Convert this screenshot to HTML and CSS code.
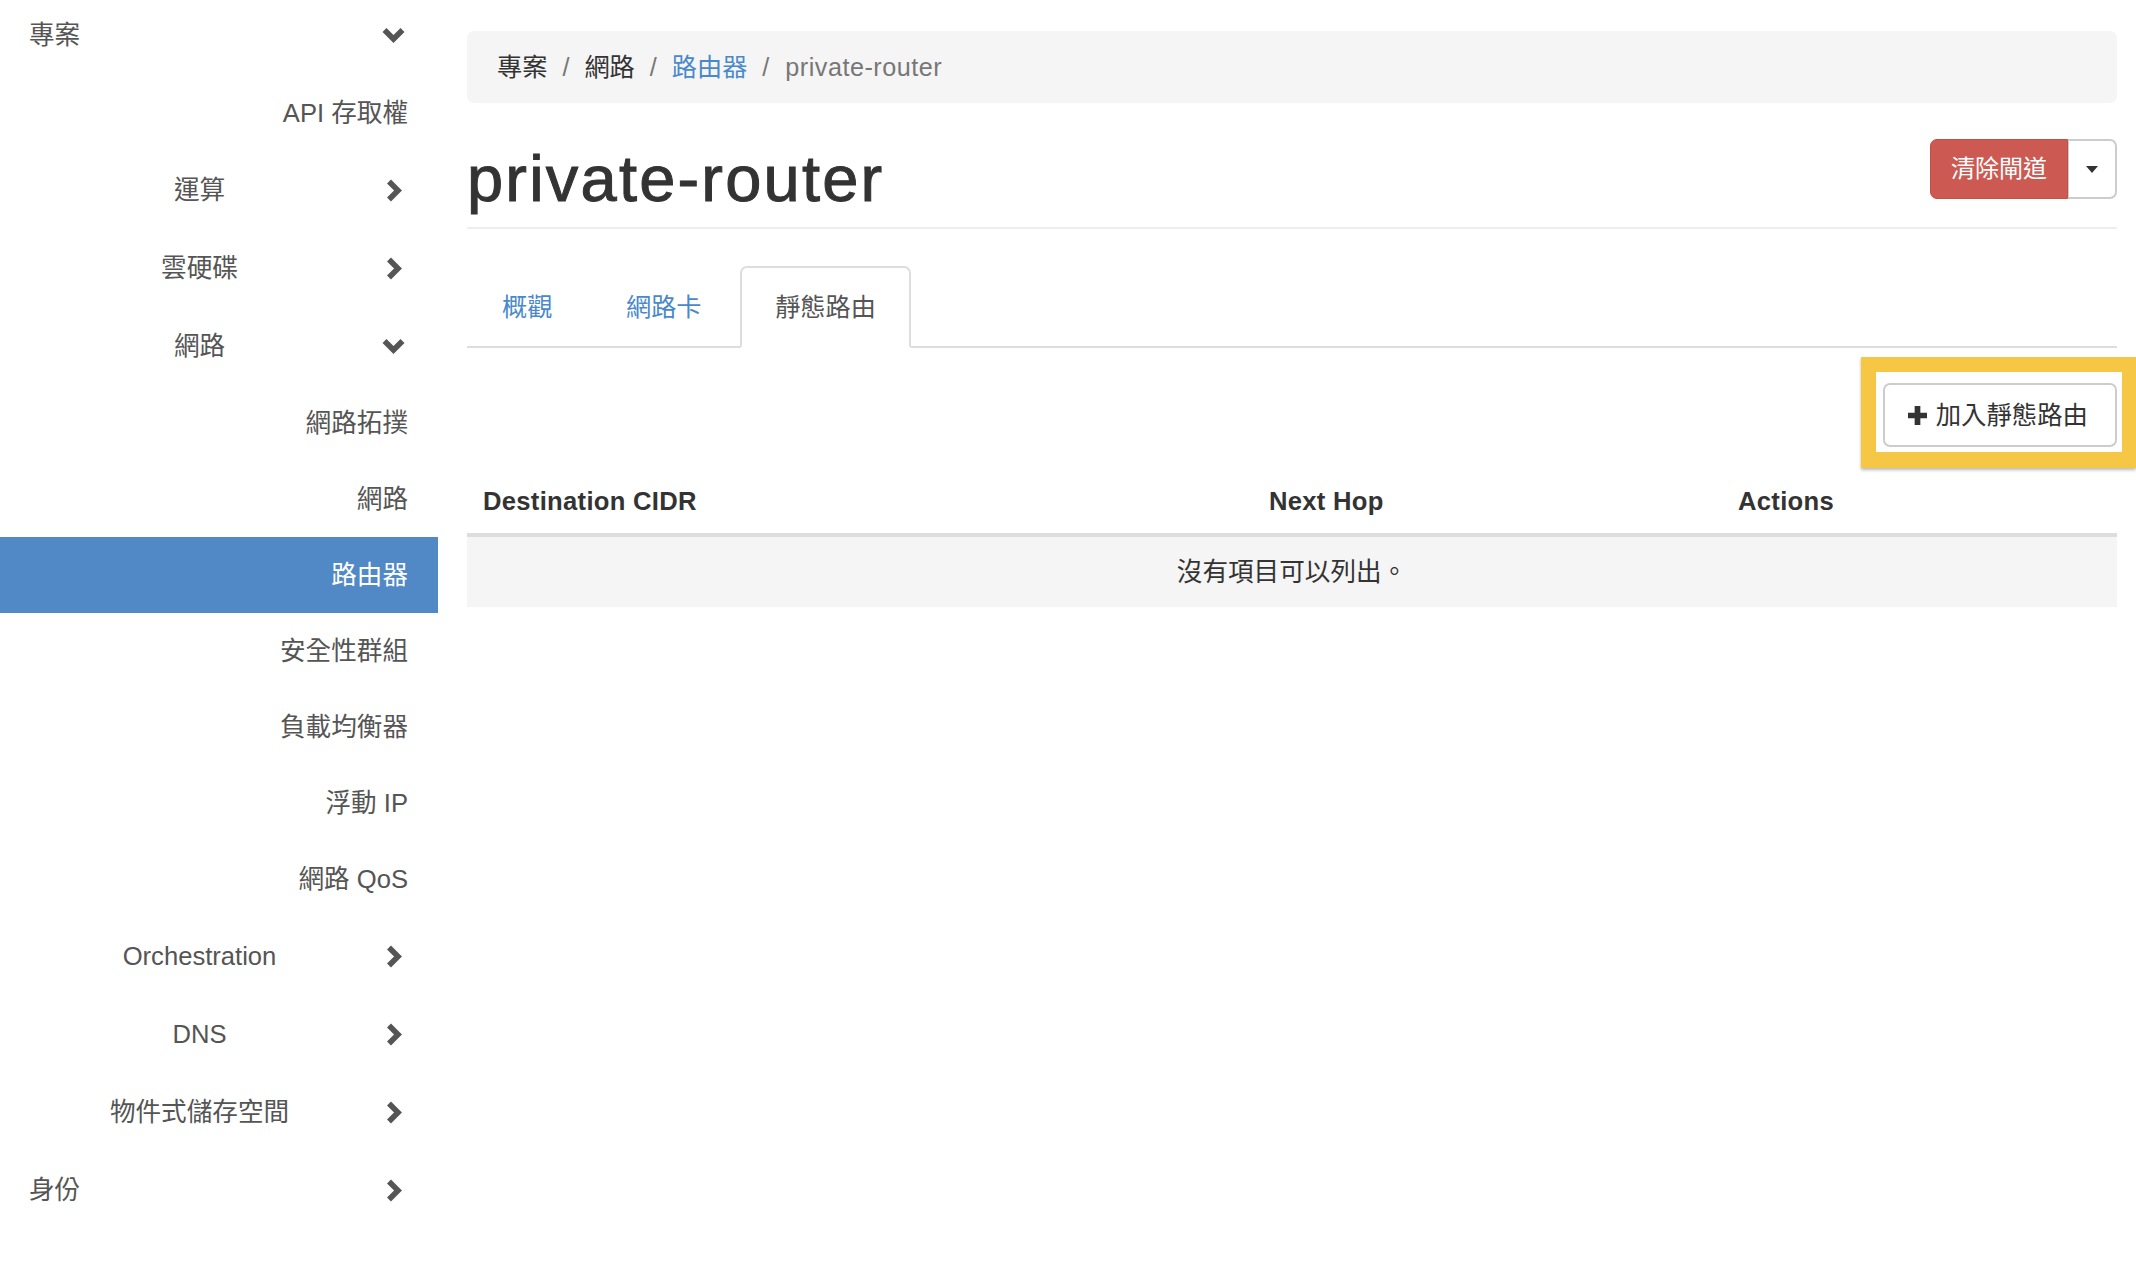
FILE: index.html
```html
<!DOCTYPE html>
<html lang="zh-Hant">
<head>
<meta charset="utf-8">
<title>private-router</title>
<link rel="stylesheet" href="styles.css">
</head>
<body>
<div class="layout">
  <nav class="sidebar">
    <div class="nav-row nav-top nav-first">
      <span class="nav-label">專案</span>
      <span class="nav-icon"><svg class="chev-down" width="23" height="16" viewBox="0 0 23 16"><polyline points="2.5,3 11.5,12 20.5,3"/></svg></span>
    </div>
    <div class="nav-row nav-leaf"><span>API 存取權</span></div>
    <div class="nav-row nav-group">
      <span class="nav-label">運算</span>
      <span class="nav-icon"><svg class="chev-right" width="16" height="23" viewBox="0 0 16 23"><polyline points="3,2.5 12,11.5 3,20.5"/></svg></span>
    </div>
    <div class="nav-row nav-group">
      <span class="nav-label">雲硬碟</span>
      <span class="nav-icon"><svg class="chev-right" width="16" height="23" viewBox="0 0 16 23"><polyline points="3,2.5 12,11.5 3,20.5"/></svg></span>
    </div>
    <div class="nav-row nav-group">
      <span class="nav-label">網路</span>
      <span class="nav-icon"><svg class="chev-down" width="23" height="16" viewBox="0 0 23 16"><polyline points="2.5,3 11.5,12 20.5,3"/></svg></span>
    </div>
    <div class="nav-row nav-leaf"><span>網路拓撲</span></div>
    <div class="nav-row nav-leaf"><span>網路</span></div>
    <div class="nav-row nav-leaf nav-active"><span>路由器</span></div>
    <div class="nav-row nav-leaf"><span>安全性群組</span></div>
    <div class="nav-row nav-leaf"><span>負載均衡器</span></div>
    <div class="nav-row nav-leaf"><span>浮動 IP</span></div>
    <div class="nav-row nav-leaf"><span>網路 QoS</span></div>
    <div class="nav-row nav-group">
      <span class="nav-label">Orchestration</span>
      <span class="nav-icon"><svg class="chev-right" width="16" height="23" viewBox="0 0 16 23"><polyline points="3,2.5 12,11.5 3,20.5"/></svg></span>
    </div>
    <div class="nav-row nav-group">
      <span class="nav-label">DNS</span>
      <span class="nav-icon"><svg class="chev-right" width="16" height="23" viewBox="0 0 16 23"><polyline points="3,2.5 12,11.5 3,20.5"/></svg></span>
    </div>
    <div class="nav-row nav-group">
      <span class="nav-label">物件式儲存空間</span>
      <span class="nav-icon"><svg class="chev-right" width="16" height="23" viewBox="0 0 16 23"><polyline points="3,2.5 12,11.5 3,20.5"/></svg></span>
    </div>
    <div class="nav-row nav-top">
      <span class="nav-label">身份</span>
      <span class="nav-icon"><svg class="chev-right" width="16" height="23" viewBox="0 0 16 23"><polyline points="3,2.5 12,11.5 3,20.5"/></svg></span>
    </div>
  </nav>

  <main class="content">
    <ol class="breadcrumb">
      <li>專案</li>
      <li>網路</li>
      <li><a class="crumb-link">路由器</a></li>
      <li class="crumb-active">private-router</li>
    </ol>

    <div class="page-header">
      <h1 class="title">private-router</h1>
      <div class="btn-group">
        <button class="btn-danger">清除閘道</button>
        <button class="btn-toggle"><span class="caret"></span></button>
      </div>
    </div>

    <ul class="nav-tabs">
      <li class="tab"><a>概觀</a></li>
      <li class="tab"><a>網路卡</a></li>
      <li class="tab tab-active"><a>靜態路由</a></li>
    </ul>

    <div class="toolbar">
      <div class="highlight">
        <button class="btn-default">
          <svg class="plus" width="19" height="19" viewBox="0 0 20 20"><path d="M7 0h6v7h7v6h-7v7H7v-7H0V7h7z"/></svg>
          <span>加入靜態路由</span>
        </button>
      </div>
    </div>

    <table class="table">
      <colgroup>
        <col class="col-cidr">
        <col class="col-hop">
        <col class="col-actions">
      </colgroup>
      <thead>
        <tr>
          <th>Destination CIDR</th>
          <th>Next Hop</th>
          <th>Actions</th>
        </tr>
      </thead>
      <tbody>
        <tr class="empty-row">
          <td colspan="3">沒有項目可以列出。</td>
        </tr>
      </tbody>
    </table>
  </main>
</div>
</body>
</html>
```

FILE: styles.css
```css
* {
  box-sizing: border-box;
}

html, body {
  margin: 0;
  padding: 0;
  background: #fff;
}

body {
  font-family: "Liberation Sans", "Noto Sans CJK TC", sans-serif;
  font-size: 25.2px;
  line-height: 36px;
  color: #333;
}

.layout {
  display: flex;
  align-items: flex-start;
  min-height: 1285px;
}

/* ---------- Sidebar ---------- */
.sidebar {
  width: 438px;
  flex: 0 0 438px;
  font-size: 25.6px;
  color: #555;
}

.nav-row {
  display: flex;
  align-items: center;
  white-space: nowrap;
}

.nav-top {
  height: 78px;
  padding: 0 33px 0 29px;
}

.nav-top.nav-first {
  height: 75px;
  padding-bottom: 5px;
}

.nav-top .nav-label {
  flex: 1;
  text-align: left;
}

.nav-group {
  height: 78px;
  padding: 0 33px 0 17px;
}

.nav-group .nav-label {
  flex: 1;
  text-align: center;
}

.nav-leaf {
  height: 76px;
  justify-content: flex-end;
  padding-right: 30px;
}

.nav-active {
  background: #5089c6;
  color: #fff;
}

.nav-icon {
  width: 23px;
  display: flex;
  align-items: center;
  justify-content: center;
}

.nav-icon svg {
  display: block;
}

.nav-icon polyline {
  fill: none;
  stroke: #555;
  stroke-width: 5.6;
  stroke-linejoin: miter;
  stroke-linecap: butt;
}

/* ---------- Content ---------- */
.content {
  flex: 1;
  min-width: 0;
  padding: 31px 19px 0 29px;
}

.breadcrumb {
  list-style: none;
  margin: 0;
  padding: 18px 30px;
  line-height: 36px;
  background: #f5f5f5;
  border-radius: 7px;
  color: #333;
}

.breadcrumb li {
  display: inline-block;
}

.breadcrumb li + li::before {
  content: "/\00a0";
  padding: 0 8px;
  color: #777;
}

.crumb-link {
  color: #4a89c9;
}

.crumb-active {
  color: #777;
  letter-spacing: 0.5px;
}

.page-header {
  margin-top: 36px;
  display: flex;
  justify-content: space-between;
  align-items: flex-start;
  padding-bottom: 12px;
  border-bottom: 2px solid #eee;
}

.title {
  margin: 4px 0 0;
  font-size: 65px;
  line-height: 72px;
  font-weight: normal;
  letter-spacing: 2.2px;
  color: #333;
  -webkit-text-stroke: 1px #333;
}

.btn-group {
  display: flex;
  height: 60px;
}

.btn-danger {
  font-family: inherit;
  font-size: 24px;
  line-height: 58px;
  height: 60px;
  padding: 0 20px;
  color: #fff;
  background: #cc5a52;
  border: 1px solid #c24f48;
  border-radius: 7px 0 0 7px;
  margin: 0;
}

.btn-toggle {
  width: 49px;
  height: 60px;
  margin: 0;
  padding: 0;
  background: #fff;
  border: 2px solid #ccc;
  border-left: 1px solid #ccc;
  border-radius: 0 7px 7px 0;
  display: flex;
  align-items: center;
  justify-content: center;
}

.caret {
  width: 0;
  height: 0;
  border-top: 7px solid #333;
  border-left: 6.5px solid transparent;
  border-right: 6.5px solid transparent;
}

/* ---------- Tabs ---------- */
.nav-tabs {
  list-style: none;
  margin: 37px 0 0;
  padding: 0;
  display: flex;
  border-bottom: 2px solid #ddd;
}

.tab {
  margin-right: 3.6px;
  margin-bottom: -2px;
}

.tab a {
  display: block;
  padding: 18px 33px;
  line-height: 42px;
  border: 2px solid transparent;
  border-radius: 7px 7px 0 0;
  color: #4a89c9;
}

.tab-active a {
  color: #555;
  background: #fff;
  border-color: #ddd #ddd transparent #ddd;
}

/* ---------- Toolbar ---------- */
.toolbar {
  margin-top: 9px;
  display: flex;
  justify-content: flex-end;
}

.highlight {
  margin-right: -19px;
  border-style: solid;
  border-color: #f6c744;
  border-width: 15px 14px 16px 15px;
  padding: 11px 5px 5px 7px;
  background: #fff;
  box-shadow: 0 2px 3px rgba(0, 0, 0, 0.28);
}

.btn-default {
  display: flex;
  align-items: center;
  height: 64px;
  margin: 0;
  padding: 0 27px 0 23px;
  font-family: inherit;
  font-size: 25.4px;
  line-height: 36px;
  color: #333;
  background: #fff;
  border: 2px solid #ccc;
  border-radius: 7px;
}

.plus {
  display: block;
  margin-right: 9px;
}

.plus path {
  fill: #333;
}

/* ---------- Table ---------- */
.table {
  width: 100%;
  border-collapse: collapse;
  font-size: 25.6px;
}

.col-cidr {
  width: 786px;
}

.col-hop {
  width: 469px;
}

.table th {
  text-align: left;
  font-weight: bold;
  padding: 15px 14px 14px 16px;
  line-height: 36px;
  border-bottom: 4px solid #ddd;
  color: #333;
  letter-spacing: 0.3px;
}

.empty-row td {
  background: #f5f5f5;
  text-align: center;
  padding: 17px 14px 16px;
  line-height: 37px;
  color: #333;
}
```
